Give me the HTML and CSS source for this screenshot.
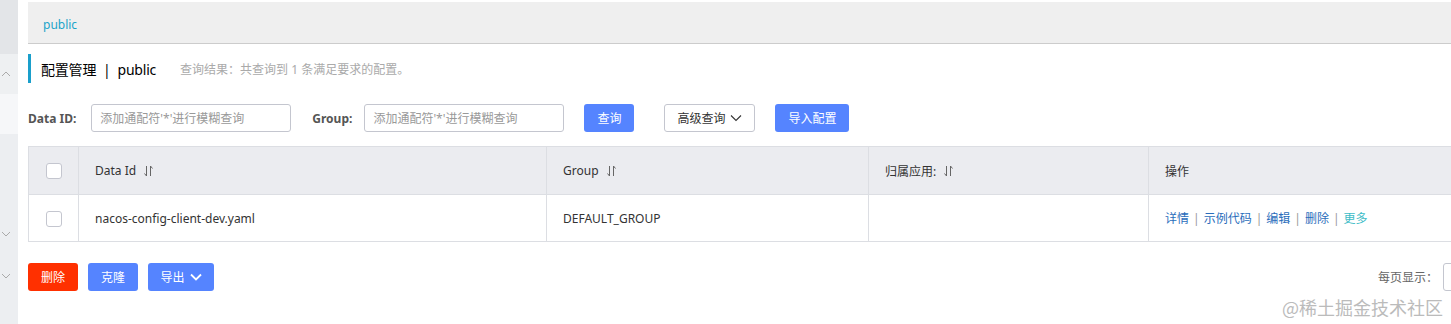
FILE: index.html
```html
<!DOCTYPE html>
<html lang="zh-CN">
<head>
    <meta charset="UTF-8">
    <title>配置管理</title>
    <link rel="stylesheet" href="styles.css">
</head>
<body>
    <div class="sidebar">
        <div class="side-top"></div>
        <div class="side-group">
            <svg class="side-arrow" width="10" height="6" viewBox="0 0 10 6"><path d="M1 5 L5 1 L9 5" fill="none" stroke="#aaa" stroke-width="1"/></svg>
        </div>
        <div class="side-item"></div>
        <div class="side-rest">
            <svg class="side-arrow down1" width="10" height="6" viewBox="0 0 10 6"><path d="M1 1 L5 5 L9 1" fill="none" stroke="#aaa" stroke-width="1"/></svg>
            <svg class="side-arrow down2" width="10" height="6" viewBox="0 0 10 6"><path d="M1 1 L5 5 L9 1" fill="none" stroke="#aaa" stroke-width="1"/></svg>
        </div>
    </div>

    <div class="main">
        <div class="ns-bar">
            <span class="ns-link">public</span>
        </div>

        <div class="page-title">
            <span class="title-text">配置管理 &nbsp;|&nbsp; public</span>
            <span class="title-desc">查询结果：共查询到 1 条满足要求的配置。</span>
        </div>

        <div class="filter">
            <label class="filter-label">Data ID:</label>
            <input class="filter-input" type="text" placeholder="添加通配符'*'进行模糊查询">
            <label class="filter-label group-label">Group:</label>
            <input class="filter-input" type="text" placeholder="添加通配符'*'进行模糊查询">
            <button class="btn btn-primary btn-query">查询</button>
            <button class="btn btn-normal btn-advanced">高级查询
                <svg width="12" height="8" viewBox="0 0 12 8"><path d="M1 1.5 L6 6.5 L11 1.5" fill="none" stroke="#333" stroke-width="1.1"/></svg>
            </button>
            <button class="btn btn-primary btn-import">导入配置</button>
        </div>

        <table class="config-table">
            <colgroup>
                <col style="width:50px">
                <col style="width:468px">
                <col style="width:322px">
                <col style="width:280px">
                <col>
            </colgroup>
            <thead>
                <tr>
                    <th class="check-cell"><span class="checkbox"></span></th>
                    <th>Data Id <svg class="sort" width="9" height="12" viewBox="0 0 9 12"><path d="M2.5 1 V11 L0.5 8.5 M6.5 11 V1 L8.5 3.5" fill="none" stroke="#666" stroke-width="1"/></svg></th>
                    <th>Group <svg class="sort" width="9" height="12" viewBox="0 0 9 12"><path d="M2.5 1 V11 L0.5 8.5 M6.5 11 V1 L8.5 3.5" fill="none" stroke="#666" stroke-width="1"/></svg></th>
                    <th>归属应用: <svg class="sort" width="9" height="12" viewBox="0 0 9 12"><path d="M2.5 1 V11 L0.5 8.5 M6.5 11 V1 L8.5 3.5" fill="none" stroke="#666" stroke-width="1"/></svg></th>
                    <th>操作</th>
                </tr>
            </thead>
            <tbody>
                <tr>
                    <td class="check-cell"><span class="checkbox"></span></td>
                    <td>nacos-config-client-dev.yaml</td>
                    <td>DEFAULT_GROUP</td>
                    <td></td>
                    <td class="actions">
                        <a>详情</a><span class="sep">|</span><a>示例代码</a><span class="sep">|</span><a>编辑</a><span class="sep">|</span><a>删除</a><span class="sep">|</span><a class="more">更多</a>
                    </td>
                </tr>
            </tbody>
        </table>

        <div class="footer">
            <div class="batch">
                <button class="btn btn-danger">删除</button>
                <button class="btn btn-primary">克隆</button>
                <button class="btn btn-primary btn-export">导出
                    <svg width="12" height="8" viewBox="0 0 12 8"><path d="M1 1.5 L6 6.5 L11 1.5" fill="none" stroke="#fff" stroke-width="1.8"/></svg>
                </button>
            </div>
            <div class="pager">
                <span class="pager-label">每页显示：</span>
                <span class="pager-select"></span>
            </div>
        </div>
    </div>

    <div class="watermark">@稀土掘金技术社区</div>
</body>
</html>
```

FILE: styles.css
```css
* {
    box-sizing: border-box;
}
body {
    margin: 0;
    width: 1451px;
    height: 324px;
    overflow: hidden;
    display: flex;
    font-family: "Noto Sans", "Noto Sans CJK SC", sans-serif;
    font-size: 12px;
    color: #333;
    background: #fff;
    position: relative;
}

/* left menu strip */
.sidebar {
    width: 18px;
    flex: none;
    display: flex;
    flex-direction: column;
    background: #eceef1;
}
.side-top {
    height: 54px;
    background: #e3e5e8;
}
.side-group {
    height: 40px;
    background: #eef0f2;
    display: flex;
    align-items: center;
    padding-left: 1px;
}
.side-item {
    height: 40px;
    background: #f6f7f9;
}
.side-rest {
    flex: 1;
    display: flex;
    flex-direction: column;
    padding-left: 1px;
}
.side-arrow.down1 {
    margin-top: 97px;
}
.side-arrow.down2 {
    margin-top: 36px;
}

.main {
    flex: none;
    width: 1510px;
    padding-left: 10px;
}

.ns-bar {
    margin-top: 2px;
    height: 42px;
    background: #efefef;
    border-bottom: 1px solid #ccc;
    display: flex;
    align-items: center;
    padding: 3px 0 0 15px;
}
.ns-link {
    color: #1ba4c9;
    font-size: 12px;
}

.page-title {
    margin-top: 10px;
    height: 29px;
    border-left: 3px solid #1a9fcb;
    display: flex;
    align-items: center;
    padding-left: 10px;
}
.title-text {
    font-size: 14px;
    color: #000;
    letter-spacing: -0.2px;
}
.title-desc {
    margin-left: 24px;
    color: #aaa;
    font-size: 12px;
}

.filter {
    margin-top: 21px;
    height: 28px;
    display: flex;
    align-items: center;
}
.filter-label {
    font-weight: bold;
    color: #555;
    font-size: 12px;
    margin-right: 15px;
}
.group-label {
    margin-left: 21px;
    margin-right: 12px;
}
.filter-input {
    width: 200px;
    height: 28px;
    border: 1px solid #c4c6cf;
    border-radius: 3px;
    padding: 0 8px;
    font-family: inherit;
    font-size: 12px;
    color: #333;
}
.filter-input::placeholder {
    color: #999;
}

.btn {
    height: 28px;
    border-radius: 3px;
    border: none;
    font-family: inherit;
    font-size: 12px;
    padding: 0 12px;
    display: inline-flex;
    align-items: center;
    gap: 5px;
    cursor: pointer;
}
.btn-primary {
    background: #5584ff;
    color: #fff;
}
.btn-danger {
    background: #ff3000;
    color: #fff;
}
.btn-normal {
    background: #fff;
    color: #333;
    border: 1px solid #c4c6cf;
}
.btn-query {
    margin-left: 20px;
    width: 50px;
    justify-content: center;
}
.btn-advanced {
    margin-left: 30px;
    width: 91px;
    justify-content: center;
}
.btn-import {
    margin-left: 20px;
    width: 74px;
    justify-content: center;
}

.config-table {
    margin-top: 14px;
    width: 100%;
    border-collapse: collapse;
    table-layout: fixed;
}
.config-table th,
.config-table td {
    border: 1px solid #dcdee3;
    text-align: left;
    padding: 0 16px;
    font-weight: normal;
    font-size: 12px;
    color: #333;
}
.config-table th {
    background: #ebecf0;
    height: 48px;
}
.config-table td {
    height: 47px;
}
.config-table .check-cell {
    padding: 0;
    text-align: center;
}
.checkbox {
    display: inline-block;
    width: 16px;
    height: 16px;
    border: 1px solid #c4c6cf;
    border-radius: 3px;
    background: #fff;
    vertical-align: middle;
}
.sort {
    vertical-align: middle;
    margin-left: 5px;
    margin-top: -2px;
}
.actions a {
    color: #2a6dbb;
}
.actions a.more {
    color: #3dbcc7;
}
.actions .sep {
    color: #999;
    margin: 0 4px;
}

.footer {
    margin-top: 21px;
    display: flex;
    justify-content: space-between;
    align-items: center;
}
.batch {
    display: flex;
    gap: 10px;
}
.batch .btn {
    width: 50px;
    justify-content: center;
}
.batch .btn-export {
    width: 66px;
}
.pager {
    display: flex;
    align-items: center;
}
.pager-label {
    color: #666;
    font-size: 12px;
    margin-right: 5px;
}
.pager-select {
    width: 85px;
    height: 28px;
    border: 1px solid #c4c6cf;
    border-radius: 3px;
}

.watermark {
    position: absolute;
    right: 8px;
    bottom: 4px;
    font-size: 18px;
    color: #bbb;
    font-family: "Noto Sans CJK SC", sans-serif;
}
```
